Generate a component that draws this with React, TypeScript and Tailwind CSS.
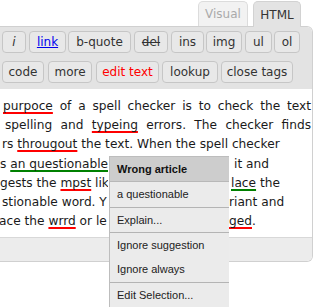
import React from "react";

const row1 = [
  { label: "i", w: "w-[24px]", ml: "ml-[2px]", cls: "italic" },
  { label: "link", w: "w-[37px]", ml: "ml-[3px]", cls: "text-[#0000ee] underline" },
  { label: "b-quote", w: "w-[63px]", ml: "ml-[2px]", cls: "" },
  { label: "del", w: "w-[34px]", ml: "ml-[3px]", cls: "line-through" },
  { label: "ins", w: "w-[33px]", ml: "ml-[3px]", cls: "" },
  { label: "img", w: "w-[36px]", ml: "ml-[2px]", cls: "" },
  { label: "ul", w: "w-[27px]", ml: "ml-[3px]", cls: "" },
  { label: "ol", w: "w-[26px]", ml: "ml-[2px]", cls: "" },
];

const row2 = [
  { label: "code", w: "w-[42px]", ml: "ml-[2px]", cls: "" },
  { label: "more", w: "w-[44px]", ml: "ml-[4px]", cls: "" },
  { label: "edit text", w: "w-[63px]", ml: "ml-[4px]", cls: "text-[#ff0000]" },
  { label: "lookup", w: "w-[56px]", ml: "ml-[3px]", cls: "" },
  { label: "close tags", w: "w-[72px]", ml: "ml-[3px]", cls: "" },
];

const Red = ({ children }: { children: React.ReactNode }) => (
  <span className="underline decoration-[#f00] decoration-2 underline-offset-[2px] [text-decoration-skip-ink:none]">
    {children}
  </span>
);

const Green = ({ children }: { children: React.ReactNode }) => (
  <span className="underline decoration-[#008000] decoration-2 underline-offset-[2px] [text-decoration-skip-ink:none]">
    {children}
  </span>
);

const ToolButton = ({ b }: { b: { label: string; w: string; ml: string; cls: string } }) => (
  <div
    className={`${b.w} ${b.ml} h-[22px] shrink-0 rounded-[4px] border border-[#c6c6c6] bg-[#e8e8e8] flex items-center justify-center text-[12px] text-[#333]`}
  >
    <span className={b.cls}>{b.label}</span>
  </div>
);

const menuItems = [
  { label: "a questionable", sep: false },
  { label: "Explain...", sep: true },
  { label: "Ignore suggestion", sep: true },
  { label: "Ignore always", sep: false },
  { label: "Edit Selection...", sep: true },
];

// line split around the context menu: left part, hidden gap, right part
const SplitLine = ({ left, right }: { left: React.ReactNode; right: React.ReactNode }) => (
  <div className="grid grid-cols-[108px_121px_1fr]">
    <div className="overflow-hidden">{left}</div>
    <div />
    <div className="overflow-hidden">{right}</div>
  </div>
);

export default function App() {
  return (
    <div className="relative w-[315px] h-[307px] overflow-hidden bg-white font-['DejaVu_Sans',sans-serif]">
      {/* tabs */}
      <div className="flex justify-end items-end h-[26px] pr-[14px] gap-[5px]">
        <div className="w-[50px] h-[25px] rounded-t-[5px] border border-b-0 border-[#dcdcdc] bg-[#f2f2f2] flex items-center justify-center text-[12px] text-[#aaaaaa]">
          Visual
        </div>
        <div className="w-[48px] h-[26px] -mb-px rounded-t-[5px] border border-b-0 border-[#d2d2d2] bg-[#e3e3e3] flex items-center justify-center text-[12px] text-[#333]">
          HTML
        </div>
      </div>

      {/* editor box */}
      <div className="w-[313px] rounded-tr-[6px] rounded-br-[6px] border-t border-r border-b border-[#d0d0d0] overflow-hidden">
        <div className="bg-[#e3e3e3] pt-[4px] pb-[6px] flex flex-col gap-[8px]">
          <div className="flex">
            {row1.map((b) => (
              <ToolButton key={b.label} b={b} />
            ))}
          </div>
          <div className="flex">
            {row2.map((b) => (
              <ToolButton key={b.label} b={b} />
            ))}
          </div>
        </div>

        <div className="h-[148px] bg-white pt-[8px] text-[12.2px] leading-[19.2px] text-[#1a1a1a] whitespace-nowrap">
          <div className="pl-[3px] pr-[1px] text-justify [text-align-last:justify] whitespace-normal">
            <Red>purpoce</Red> of a spell checker is to check the text
          </div>
          <div className="pl-[5px] pr-[1px] text-justify [text-align-last:justify] whitespace-normal">
            spelling and <Red>typeing</Red> errors. The checker finds
          </div>
          <div className="pl-[2px]">
            rs <Red>througout</Red> the text. When the spell checker
          </div>
          <SplitLine
            left={
              <>
                s <Green>an questionable</Green>
              </>
            }
            right={<div className="pl-[5px]">it and</div>}
          />
          <SplitLine
            left={
              <>
                gests the <Red>mpst</Red> lik
              </>
            }
            right={
              <div className="pl-[2px]">
                <Green>lace</Green> the
              </div>
            }
          />
          <SplitLine
            left={<div className="pl-[2px]">stionable word. Y</div>}
            right={<div>riant and</div>}
          />
          <SplitLine
            left={
              <div className="-ml-[1px]">
                ace the <Red>wrrd</Red> or le
              </div>
            }
            right={
              <div>
                <Red>ged</Red>.
              </div>
            }
          />
        </div>

        <div className="h-[24px] bg-[#ececec] border-t border-[#d8d8d8]" />
      </div>

      {/* context menu */}
      <div className="absolute left-[109px] top-[156px] w-[120px] bg-[#ebebeb] border-l border-t border-[#bdbdbd] font-['Liberation_Sans',sans-serif] text-[11px] text-[#222]">
        <div className="h-[25px] bg-[#cdcdcd] border-b border-[#b8b8b8] flex items-center pl-[7px] font-bold text-[#111]">
          Wrong article
        </div>
        {menuItems.map((m) => (
          <div
            key={m.label}
            className={`h-[25px] flex items-center pl-[7px] ${m.sep ? "border-t border-[#b4b4b4]" : ""}`}
          >
            {m.label}
          </div>
        ))}
      </div>
    </div>
  );
}
